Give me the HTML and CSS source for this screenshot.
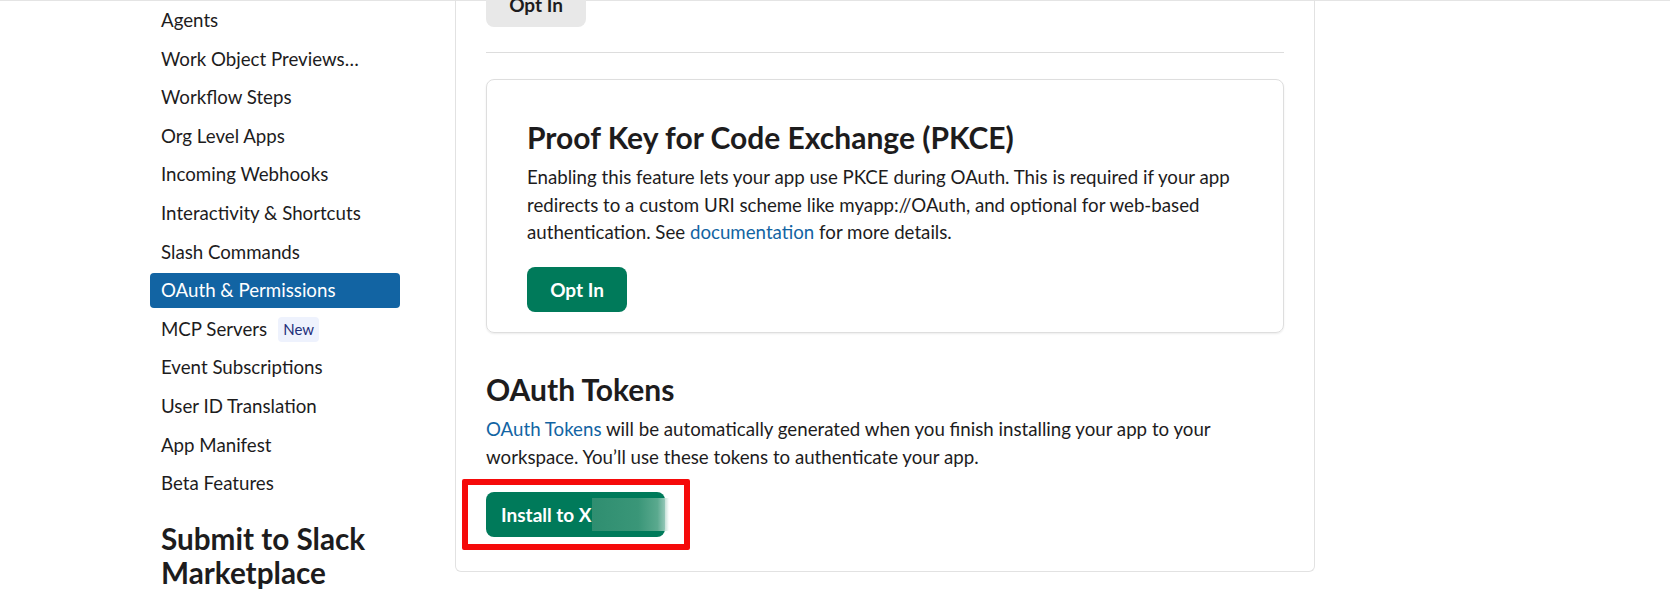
FILE: index.html
```html
<!DOCTYPE html>
<html lang="en">
<head>
    <meta charset="UTF-8">
    <meta name="viewport" content="width=device-width, initial-scale=1.0">
    <title>OAuth &amp; Permissions</title>
    <link rel="stylesheet" href="styles.css">
</head>
<body>
    <div class="page">
        <nav class="sidebar">
            <ul class="nav-list">
                <li class="nav-item">Agents</li>
                <li class="nav-item">Work Object Previews…</li>
                <li class="nav-item">Workflow Steps</li>
                <li class="nav-item">Org Level Apps</li>
                <li class="nav-item">Incoming Webhooks</li>
                <li class="nav-item">Interactivity &amp; Shortcuts</li>
                <li class="nav-item">Slash Commands</li>
                <li class="nav-item active">OAuth &amp; Permissions</li>
                <li class="nav-item">MCP Servers <span class="badge">New</span></li>
                <li class="nav-item">Event Subscriptions</li>
                <li class="nav-item">User ID Translation</li>
                <li class="nav-item">App Manifest</li>
                <li class="nav-item">Beta Features</li>
            </ul>
            <h2 class="nav-heading">Submit to Slack Marketplace</h2>
        </nav>

        <main class="panel">
            <button class="btn btn-gray">Opt In</button>
            <hr class="divider">

            <section class="card">
                <h2 class="title">Proof Key for Code Exchange (PKCE)</h2>
                <p class="text">Enabling this feature lets your app use PKCE during OAuth. This is required if your app redirects to a custom URI scheme like myapp://OAuth, and optional for web-based authentication. See <a href="#">documentation</a> for more details.</p>
                <button class="btn btn-green">Opt In</button>
            </section>

            <section class="tokens">
                <h2 class="title">OAuth Tokens</h2>
                <p class="text"><a href="#">OAuth Tokens</a> will be automatically generated when you finish installing your app to your workspace. You’ll use these tokens to authenticate your app.</p>
                <button class="btn btn-green btn-install">Install to X<span class="blur"></span></button>
            </section>
        </main>
    </div>
</body>
</html>
```

FILE: styles.css
```css
body {
    margin: 0;
    font-family: Lato, "Open Sans", sans-serif;
    color: #1d1c1d;
    background: #fff;
    overflow: hidden;
}
.page {
    display: flex;
    align-items: flex-start;
    gap: 55px;
    padding-left: 150px;
    border-top: 1px solid #e4e4e4;
    height: 597px;
}
.sidebar {
    width: 250px;
    flex-shrink: 0;
    padding-top: 2px;
}
.nav-list {
    list-style: none;
    margin: 0;
    padding: 0;
}
.nav-item {
    display: flex;
    align-items: center;
    gap: 11px;
    font-size: 18.7px;
    line-height: 25px;
    padding: 5px 11px;
    margin-bottom: 3.6px;
    border-radius: 4px;
    white-space: nowrap;
}
.nav-item.active {
    background-color: #1264a3;
    color: white;
}
.badge {
    font-size: 15px;
    line-height: 25px;
    padding: 0 5px;
    border-radius: 4px;
    background-color: #eef2fd;
    color: #1e2f7a;
}
.nav-heading {
    font-size: 29.7px;
    line-height: 34px;
    font-weight: 700;
    margin: 21px 0 0;
    padding-left: 11px;
}
.panel {
    width: 798px;
    margin-top: -19px;
    padding: 0 30px 34px;
    border: 1px solid #e2e2e2;
    border-top: none;
    border-radius: 0 0 6px 6px;
}
.btn {
    font-family: inherit;
    font-size: 19px;
    font-weight: 700;
    height: 45px;
    padding: 0 22px;
    border: none;
    border-radius: 8px;
    cursor: pointer;
}
.btn-gray {
    width: 100px;
    background-color: #e8e8e8;
    color: #1d1c1d;
}
.btn-green {
    width: 100px;
    background-color: #007a5a;
    color: white;
}
.divider {
    border: none;
    border-top: 1px solid #dddddd;
    margin: 25px 0 0;
}
.card {
    margin-top: 26px;
    padding: 40px 40px 20px;
    border: 1px solid #dedede;
    border-radius: 8px;
    box-shadow: 0 1px 2px rgba(0, 0, 0, 0.08);
}
.title {
    font-size: 30px;
    line-height: 34px;
    font-weight: 700;
    margin: 0;
}
.text {
    font-size: 18.7px;
    line-height: 27.7px;
    margin: 10px 0 20px;
}
.text a {
    color: #1264a3;
    text-decoration: none;
}
.tokens {
    margin-top: 39px;
}
.btn-install {
    position: relative;
    display: inline-flex;
    align-items: center;
    width: auto;
    padding: 0 0 0 15px;
}
.btn-install::after {
    content: "";
    position: absolute;
    inset: -13px -25px -13px -24px;
    border: 6px solid #f50a0a;
    border-radius: 2px;
}
.blur {
    display: inline-block;
    width: 77px;
    height: 33px;
    margin-right: -4px;
    background: linear-gradient(to right, #2f8e70 0%, #3a9678 60%, #5aa98e 85%, rgba(255, 255, 255, 0.7) 100%);
}
```
